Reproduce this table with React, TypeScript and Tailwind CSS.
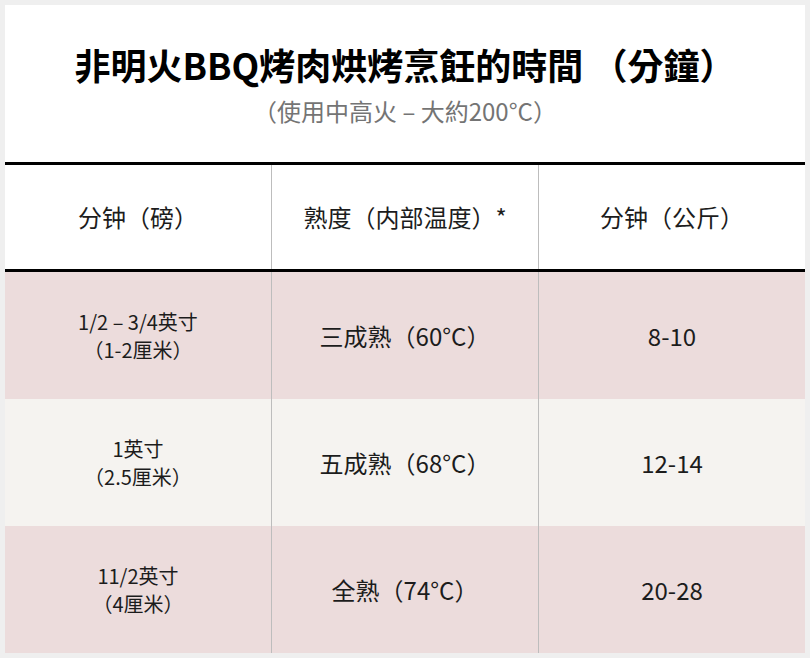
const rows = [
  { size: "1/2 – 3/4英寸", metric: "（1-2厘米）", doneness: "三成熟（60°C）", minutes: "8-10", bg: "bg-[#ecdcdc]" },
  { size: "1英寸", metric: "（2.5厘米）", doneness: "五成熟（68°C）", minutes: "12-14", bg: "bg-[#f5f3f0]" },
  { size: "11/2英寸", metric: "（4厘米）", doneness: "全熟（74°C）", minutes: "20-28", bg: "bg-[#ecdcdc]" },
];

const headers = ["分钟（磅）", "熟度（内部温度）*", "分钟（公斤）"];

export default function App() {
  return (
    <div className="w-[810px] h-[658px] bg-[#efefef] p-[5px] font-['Noto_Sans_CJK_TC','Noto_Sans_CJK_SC',sans-serif]">
      <div className="w-[800px] bg-white">
        {/* Title */}
        <div className="h-[157px] flex flex-col items-center pt-[37px]">
          <h1 className="text-[36px] leading-[44px] font-bold text-black">
            非明火BBQ烤肉烘烤烹飪的時間 （分鐘）
          </h1>
          <p className="mt-[10px] text-[24px] leading-[30px] text-[#747474]">
            （使用中高火 – 大約200°C）
          </p>
        </div>

        {/* Table */}
        <div className="border-t-[3px] border-black font-['Noto_Sans_CJK_SC','Noto_Sans_CJK_TC',sans-serif] text-[#1c1c1c]">
          <div className="grid grid-cols-[267px_267px_266px] h-[107px] border-b-[3px] border-black">
            {headers.map((h, i) => (
              <div
                key={h}
                className={`flex items-center justify-center text-[24px] ${i < 2 ? "border-r border-[#bdbdbd]" : ""}`}
              >
                {h}
              </div>
            ))}
          </div>

          {rows.map((r) => (
            <div key={r.minutes} className={`grid grid-cols-[267px_267px_266px] h-[127px] ${r.bg}`}>
              <div className="flex flex-col items-center justify-center border-r border-[#bdbdbd] text-[20px] leading-[28px]">
                <span>{r.size}</span>
                <span>{r.metric}</span>
              </div>
              <div className="flex items-center justify-center border-r border-[#bdbdbd] text-[24px]">
                {r.doneness}
              </div>
              <div className="flex items-center justify-center text-[24px]">{r.minutes}</div>
            </div>
          ))}
        </div>
      </div>
    </div>
  );
}
